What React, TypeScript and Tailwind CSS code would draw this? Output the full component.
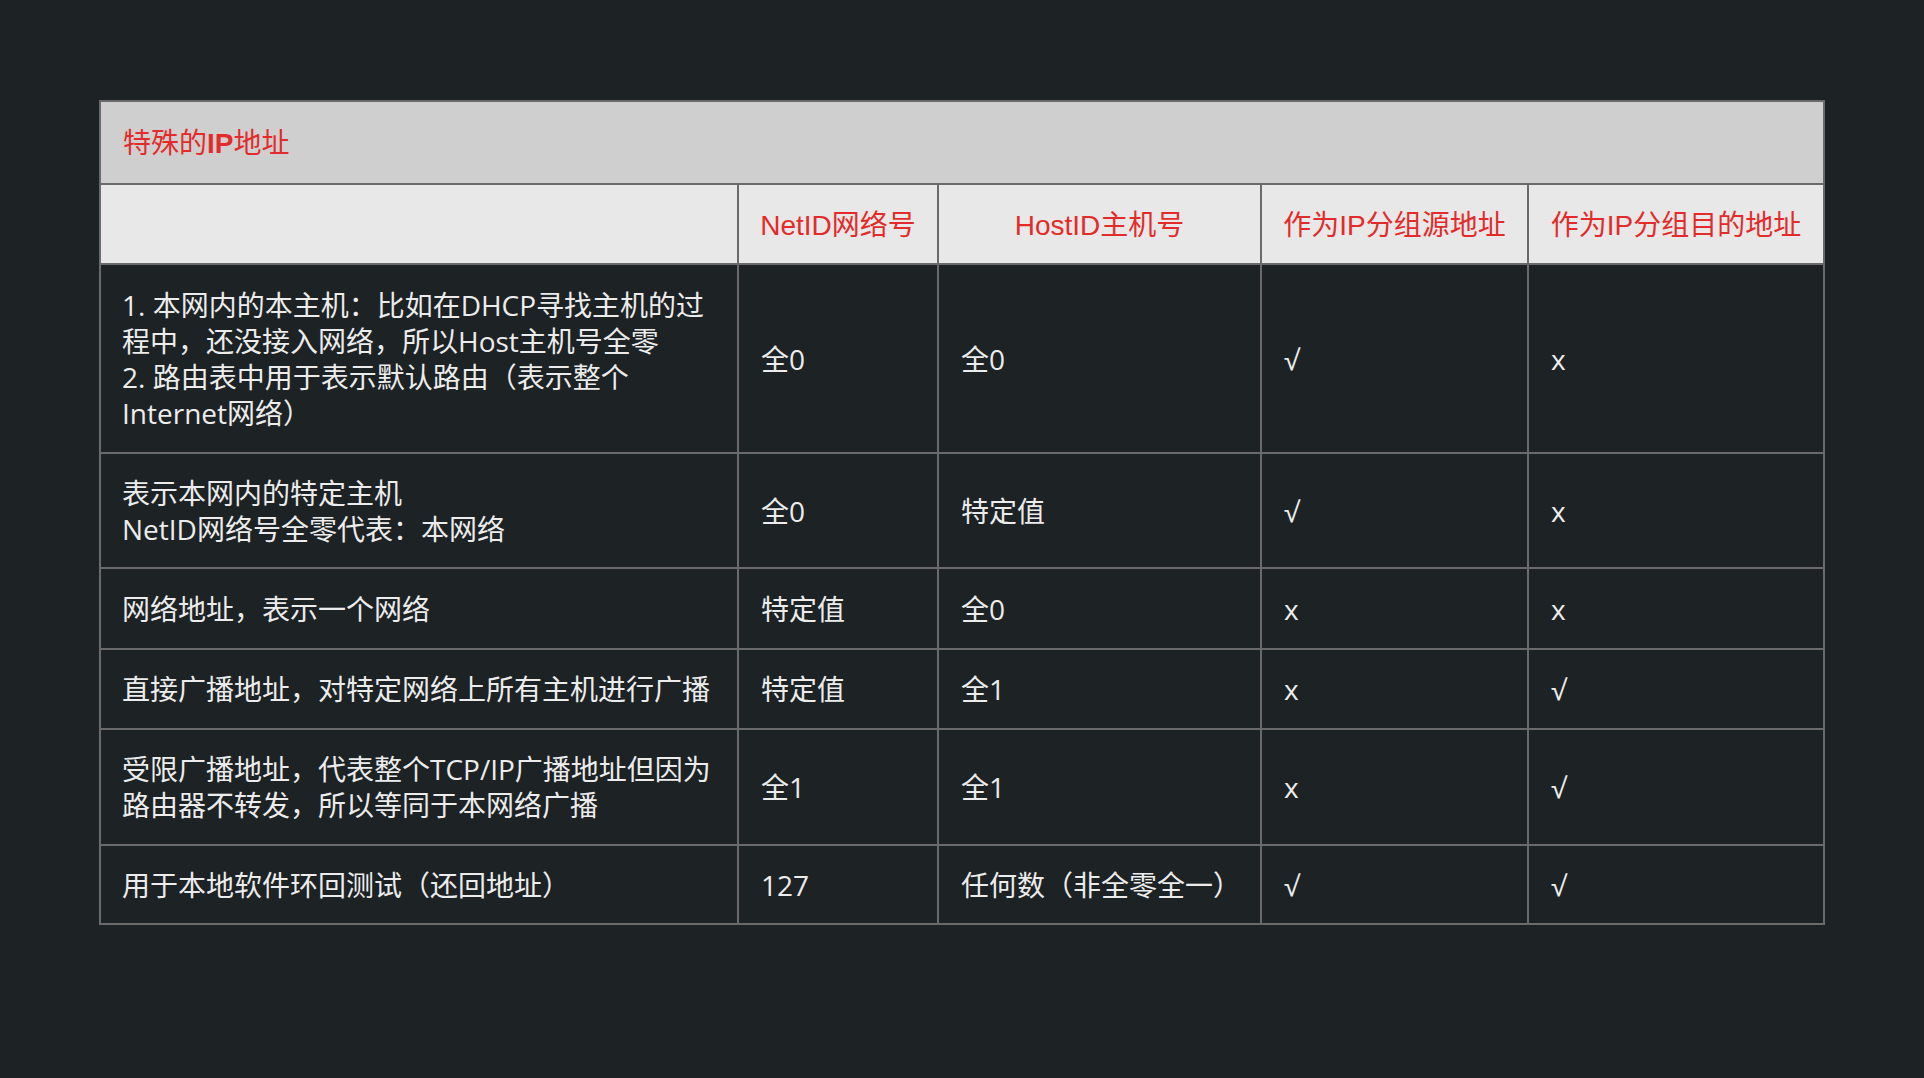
const rows = [
  {
    desc: ["1. 本网内的本主机：比如在DHCP寻找主机的过", "程中，还没接入网络，所以Host主机号全零", "2. 路由表中用于表示默认路由（表示整个", "Internet网络）"],
    net: "全0",
    host: "全0",
    src: "√",
    dst: "x",
    h: "h-[189px]",
  },
  {
    desc: ["表示本网内的特定主机", "NetID网络号全零代表：本网络"],
    net: "全0",
    host: "特定值",
    src: "√",
    dst: "x",
    h: "h-[115px]",
  },
  {
    desc: ["网络地址，表示一个网络"],
    net: "特定值",
    host: "全0",
    src: "x",
    dst: "x",
    h: "h-[81px]",
  },
  {
    desc: ["直接广播地址，对特定网络上所有主机进行广播"],
    net: "特定值",
    host: "全1",
    src: "x",
    dst: "√",
    h: "h-[80px]",
  },
  {
    desc: ["受限广播地址，代表整个TCP/IP广播地址但因为", "路由器不转发，所以等同于本网络广播"],
    net: "全1",
    host: "全1",
    src: "x",
    dst: "√",
    h: "h-[116px]",
  },
  {
    desc: ["用于本地软件环回测试（还回地址）"],
    net: "127",
    host: "任何数（非全零全一）",
    src: "√",
    dst: "√",
    h: "h-[79px]",
  },
];

const headers = ["NetID网络号", "HostID主机号", "作为IP分组源地址", "作为IP分组目的地址"];

export default function App() {
  return (
    <div className="w-[1924px] h-[1078px] bg-[#1d2225] pt-[100px] pl-[99px]">
      <table className="table-fixed border-collapse w-[1724px]">
        <colgroup>
          <col className="w-[638px]" />
          <col className="w-[200px]" />
          <col className="w-[323px]" />
          <col className="w-[267px]" />
          <col className="w-[296px]" />
        </colgroup>
        <tbody>
          <tr className="h-[83px]">
            <td
              colSpan={5}
              className="border-2 border-[#6a6a6a] bg-[#cfcfcf] pl-[22px] pt-[3px] text-[28px] text-[#e32b2b] font-['Liberation_Sans','Noto_Sans_CJK_SC',sans-serif]"
            >
              特殊的<span className="font-bold">IP</span>地址
            </td>
          </tr>
          <tr className="h-[80px] bg-[#e8e8e8]">
            <td className="border-2 border-[#6a6a6a]"></td>
            {headers.map((h) => (
              <td
                key={h}
                className="border-2 border-[#6a6a6a] pt-[3px] text-center text-[28px] text-[#e32b2b] whitespace-nowrap font-['Liberation_Sans','Noto_Sans_CJK_SC',sans-serif]"
              >
                {h}
              </td>
            ))}
          </tr>
          {rows.map((r, i) => (
            <tr key={i} className={`${r.h} text-[28px] leading-[36px] text-[#ececec] font-['Open_Sans','Noto_Sans_CJK_SC',sans-serif]`}>
              <td className="border-2 border-[#6a6a6a] pl-[21px] whitespace-nowrap">
                {r.desc.map((line, j) => (
                  <div key={j}>{line}</div>
                ))}
              </td>
              <td className="border-2 border-[#6a6a6a] pl-[22px] whitespace-nowrap">{r.net}</td>
              <td className="border-2 border-[#6a6a6a] pl-[22px] whitespace-nowrap">{r.host}</td>
              <td className="border-2 border-[#6a6a6a] pl-[22px]">{r.src}</td>
              <td className="border-2 border-[#6a6a6a] pl-[22px]">{r.dst}</td>
            </tr>
          ))}
        </tbody>
      </table>
    </div>
  );
}
